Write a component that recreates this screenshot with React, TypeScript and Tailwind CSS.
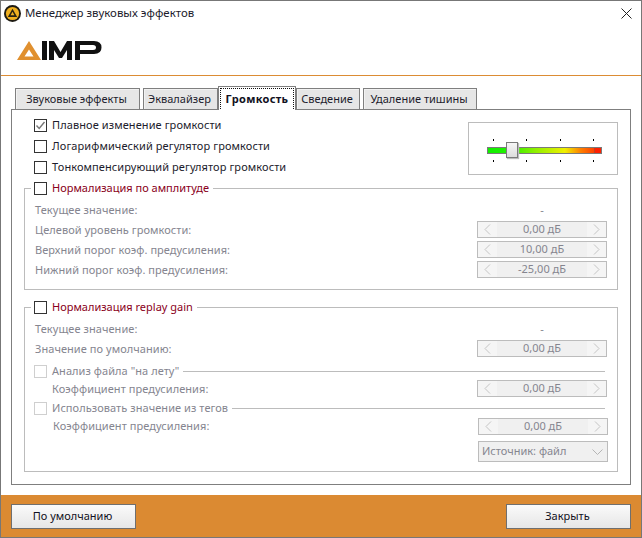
const font = "font-['Noto_Sans','DejaVu_Sans',sans-serif]";

function Check({ checked, disabled }: { checked?: boolean; disabled?: boolean }) {
  return (
    <span
      className={`flex h-[13px] w-[13px] shrink-0 items-center justify-center border bg-white ${
        disabled ? "border-[#cfcfcf]" : "border-[#333333]"
      }`}
    >
      {checked && (
        <svg width="11" height="11" viewBox="0 0 11 11" fill="none">
          <path d="M1.5 5.5 L4.2 8.5 L9.5 2" stroke="#777777" strokeWidth="1.4" />
        </svg>
      )}
    </span>
  );
}

function Option({ label, checked }: { label: string; checked?: boolean }) {
  return (
    <div className="flex items-center gap-[5px]">
      <Check checked={checked} />
      <span className="text-[11px] leading-[14px] tracking-[0.09px] text-[#1c1c2c]">{label}</span>
    </div>
  );
}

function Spin({ value }: { value: string }) {
  return (
    <div className="flex h-[17px] w-[130px] items-stretch border border-[#bcbcbc] bg-[#f0f0f0] text-[11px] leading-[14px] text-[#85858f]">
      <span className="flex w-[19px] items-center justify-center bg-[#f5f5f5]">
        <svg width="7" height="11" viewBox="0 0 7 11" fill="none">
          <path d="M6 0.5 L1 5.5 L6 10.5" stroke="#c4c4c4" />
        </svg>
      </span>
      <span className="flex-1 text-center">{value}</span>
      <span className="flex w-[19px] items-center justify-center bg-[#f5f5f5]">
        <svg width="7" height="11" viewBox="0 0 7 11" fill="none">
          <path d="M1 0.5 L6 5.5 L1 10.5" stroke="#c4c4c4" />
        </svg>
      </span>
    </div>
  );
}

function Row({ label, value, dash }: { label: string; value?: string; dash?: boolean }) {
  return (
    <div className="flex h-[20px] items-center justify-between pl-[10px] pr-[10px]">
      <span className="mt-[2px] text-[11px] tracking-[0.06px] text-[#85858f]">{label}</span>
      {dash ? (
        <span className="mt-[2px] w-[130px] text-center text-[11px] text-[#85858f]">-</span>
      ) : (
        <Spin value={value ?? ""} />
      )}
    </div>
  );
}

function Tab({ label, width, active }: { label: string; width: string; active?: boolean }) {
  if (active) {
    return (
      <div className={`relative z-10 -mb-px flex h-[24px] items-center justify-center border border-b-0 border-[#7f7f7f] bg-white p-px ${width}`}>
        <span className="flex h-full w-full items-center justify-center border border-dotted border-[#111111] border-b-0 text-[11px] font-bold tracking-[0.3px] text-[#111122]">
          {label}
        </span>
      </div>
    );
  }
  return (
    <div className={`flex h-[21px] items-center justify-center border border-b-0 border-[#7f7f7f] bg-[#e6e6e6] pr-[2px] text-[11px] text-[#1c1c2c] shadow-[inset_1px_1px_0_#f2f2f2] ${width}`}>
      {label}
    </div>
  );
}

function Legend({ label, disabled }: { label: string; disabled?: boolean }) {
  return (
    <div className="-mt-[8px] ml-[6px] flex h-[14px] w-fit items-center gap-[5px] bg-white pl-[3px] pr-[4px]">
      <Check disabled={disabled} />
      <span className="text-[11px] text-[#8a0020]">{label}</span>
    </div>
  );
}

function SubHeader({ label }: { label: string }) {
  return (
    <div className="flex h-[14px] items-center pl-[9px] pr-[12px]">
      <Check disabled />
      <span className="ml-[5px] text-[11px] tracking-[0.06px] text-[#85858f]">{label}</span>
      <span className="ml-[4px] h-px flex-1 bg-[#bcbcbc]" />
    </div>
  );
}

function GainSlider() {
  const ticks = ["ml-[6px]", "ml-[32px]", "ml-[33px]", "ml-[32px]"];
  return (
    <div className="h-[53px] w-[150px] border border-[#bcbcbc] bg-white pl-[18px] pt-[16px]">
      <div className="w-[115px]">
        <div className="flex">
          {ticks.map((t) => (
            <span key={t + "a"} className={`h-[2px] w-px bg-black ${t}`} />
          ))}
        </div>
        <div className="relative my-[6px] h-[7px] border border-[#7a7a7a] bg-[linear-gradient(90deg,#10f000_0%,#20f000_17%,#90f000_42%,#f0f000_68%,#ff8000_82%,#ff4000_94%)]">
          <span className="absolute -top-[6px] left-[18px] h-[16px] w-[12px] border border-[#7a7a7a] bg-[linear-gradient(180deg,#f6f6f6,#dcdcdc)] shadow-[1px_1px_1px_#bbbbbb]" />
          <span className="absolute inset-y-0 right-0 w-[7px] border-l border-[#c04020] bg-[#ff2000]" />
        </div>
        <div className="flex">
          {ticks.map((t) => (
            <span key={t + "b"} className={`h-[2px] w-px bg-black ${t}`} />
          ))}
        </div>
      </div>
    </div>
  );
}

function FooterButton({ label }: { label: string }) {
  return (
    <button className="h-[25px] w-[125px] border border-[#6f6f6f] bg-[linear-gradient(180deg,#fafafa,#e6e6e6)] pr-[2px] text-[11px] text-[#111122]">
      {label}
    </button>
  );
}

export default function App() {
  return (
    <div className={`${font} flex h-[538px] w-[642px] flex-col border border-[#777777] bg-white`}>
      {/* title bar */}
      <div className="flex h-[24px] items-center pl-[3px] pr-[9px]">
        <svg width="17" height="17" viewBox="0 0 16 16">
          <circle cx="8" cy="8" r="8" fill="#1d1a12" />
          <circle cx="8" cy="8" r="6.2" fill="#f0b020" />
          <path d="M8 3.6 L12.4 11.2 H3.6 Z M8 6.4 L6.2 9.6 H9.8 Z" fill="#2a2412" fillRule="evenodd" />
        </svg>
        <span className="ml-[4px] flex-1 text-[11.45px] text-[#1c1c2c]">Менеджер звуковых эффектов</span>
        <svg width="11" height="11" viewBox="0 0 11 11" fill="none">
          <path d="M0.5 0.5 L10.5 10.5 M10.5 0.5 L0.5 10.5" stroke="#222222" />
        </svg>
      </div>

      {/* logo */}
      <div className="flex h-[51px] items-start border-b border-[#dc8c34] pl-[16px] pt-[16px]">
        <svg width="85" height="19" viewBox="0 0 85 19">
          <path d="M12 0 L24 19 H0 Z M12 8.5 L7.5 15.5 H16.5 Z" fill="#e0902f" fillRule="evenodd" />
          <path d="M25 0 H30 V19 H25 Z" fill="#111111" />
          <path d="M32 19 V0 H37 L43.5 11 L50 0 H55 V19 H50 V9 L45 17 H42 L37 9 V19 Z" fill="#111111" />
          <path d="M58 0 H77 Q84.5 0 84.5 6.5 Q84.5 13 77 13 H63 V19 H58 Z M63 4 V9 H76 Q79 9 79 6.5 Q79 4 76 4 Z" fill="#111111" fillRule="evenodd" />
        </svg>
      </div>

      {/* tabs and page */}
      <div className="flex flex-1 flex-col px-[10px] pt-[9px]">
        <div className="flex h-[24px] items-end pl-[4px]">
          <Tab label="Звуковые эффекты" width="w-[125px]" />
          <div className="w-[3px]" />
          <Tab label="Эквалайзер" width="w-[75px]" />
          <Tab label="Громкость" width="w-[78px]" active />
          <Tab label="Сведение" width="w-[64px]" />
          <div className="w-[3px]" />
          <Tab label="Удаление тишины" width="w-[114px]" />
        </div>
        <div className="flex h-[376px] flex-col border border-[#7f7f7f] px-[12px]">
          <div className="flex h-[72px] justify-between">
            <div className="flex flex-col gap-[7px] pl-[10px] pt-[8px]">
              <Option label="Плавное изменение громкости" checked />
              <Option label="Логарифмический регулятор громкости" />
              <Option label="Тонкомпенсирующий регулятор громкости" />
            </div>
            <div className="pt-[12px]">
              <GainSlider />
            </div>
          </div>

          <div className="mt-[6px] h-[102px] border border-[#bcbcbc]">
            <Legend label="Нормализация по амплитуде" />
            <div className="mt-[4px]">
              <Row label="Текущее значение:" dash />
              <Row label="Целевой уровень громкости:" value="0,00 дБ" />
              <Row label="Верхний порог коэф. предусиления:" value="10,00 дБ" />
              <Row label="Нижний порог коэф. предусиления:" value="-25,00 дБ" />
            </div>
          </div>

          <div className="mt-[17px] h-[165px] border border-[#bcbcbc]">
            <Legend label="Нормализация replay gain" />
            <div className="mt-[4px]">
              <Row label="Текущее значение:" dash />
              <Row label="Значение по умолчанию:" value="0,00 дБ" />
            </div>
            <div className="mt-[6px]">
              <SubHeader label={'Анализ файла "на лету"'} />
            </div>
            <div className="flex h-[20px] items-center justify-between pl-[27px] pr-[10px]">
              <span className="mt-[2px] text-[11px] tracking-[0.06px] text-[#85858f]">Коэффициент предусиления:</span>
              <Spin value="0,00 дБ" />
            </div>
            <div className="mt-[3px]">
              <SubHeader label="Использовать значение из тегов" />
            </div>
            <div className="mt-[1px] flex h-[20px] items-center justify-between pl-[28px] pr-[9px]">
              <span className="text-[11px] tracking-[0.06px] text-[#85858f]">Коэффициент предусиления:</span>
              <Spin value="0,00 дБ" />
            </div>
            <div className="mt-[5px] flex justify-end pr-[9px]">
              <div className="flex h-[21px] w-[130px] items-center justify-between border border-[#bcbcbc] bg-[#f0f0f0] pl-[3px] pr-[4px] text-[11px] text-[#85858f]">
                <span>Источник: файл</span>
                <svg width="11" height="6" viewBox="0 0 11 6" fill="none">
                  <path d="M0.5 0.5 L5.5 5.5 L10.5 0.5" stroke="#b5b5b5" />
                </svg>
              </div>
            </div>
          </div>
        </div>
      </div>

      {/* footer */}
      <div className="mt-[10px] flex h-[42px] items-start justify-between bg-[#db8a32] px-[10px] pt-[9px]">
        <FooterButton label="По умолчанию" />
        <FooterButton label="Закрыть" />
      </div>
    </div>
  );
}
